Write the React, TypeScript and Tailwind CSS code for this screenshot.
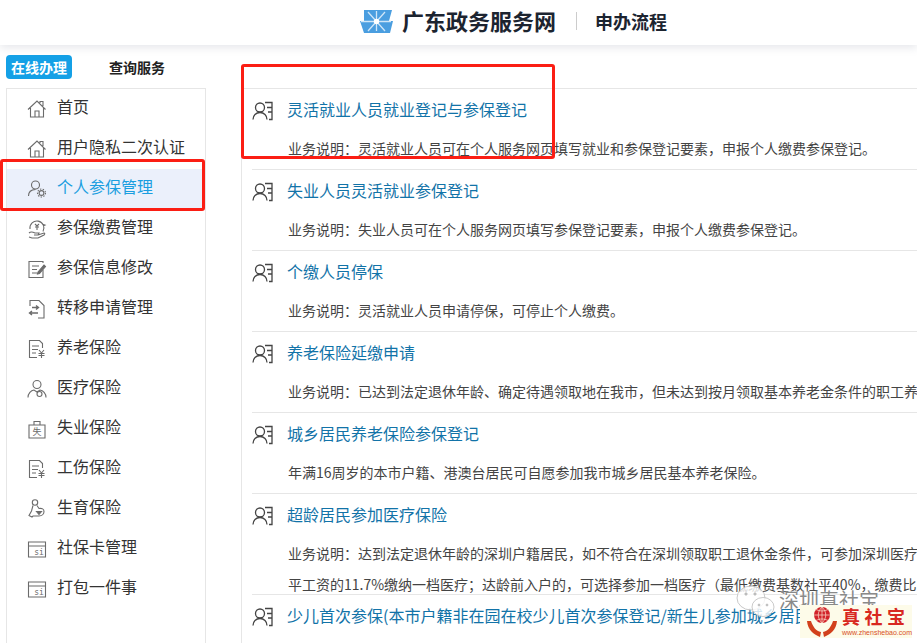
import type { ReactNode } from "react";

const font = { fontFamily: '"Noto Sans CJK SC", "Noto Sans", sans-serif' };

const Icon = ({ children }: { children: ReactNode }) => (
  <svg viewBox="0 0 20 20" className="w-5 h-5 shrink-0" fill="none" stroke="#6b6b6b" strokeWidth="1.1">
    {children}
  </svg>
);

const House = () => (
  <Icon>
    <path d="M1 10.500 10 2l8.500 8.500M3.500 9v9h13V9M8 18v-6h4v6M13 4V2.500h3v4.500" />
  </Icon>
);
const PersonGear = () => (
  <Icon>
    <circle cx="8.500" cy="6" r="4" />
    <path d="M1.500 17c0-4 2.500-6.500 7-6.500" />
    <circle cx="14.500" cy="14" r="2.400" />
    <circle cx="14.500" cy="14" r="4" strokeDasharray="1.400 1.400" />
  </Icon>
);
const Pay = () => (
  <Icon>
    <path d="M3 10a7 7 0 1 1 13 2.500M15 5l3 1-2 1" />
    <path d="M8 5l2 2 2-2M10 7v4M8 8h4" />
    <path d="M2 14c2-2 4-1 6 0h4l-1 2H7m4 0 6-2c1 0 1 1 0 2l-6 3H5l-3-1" />
  </Icon>
);
const Edit = () => (
  <Icon>
    <path d="M16 11v7.500H2v-16h14V4" />
    <path d="M5 7h7M5 10.500h5M5 14h5" />
    <path d="m11 13 6-7 1.500 1.500-6 7-2 .5z" fill="#6b6b6b" />
  </Icon>
);
const Transfer = () => (
  <Icon>
    <path d="M3 7V1.500h9l5 5v12.500h-6" />
    <path d="M5 8.500h6M9 6.500l2.500 2-2.500 2" strokeWidth="1.400" />
    <path d="M11 14H2.500M5 12l-2.500 2 2.500 2" strokeWidth="1.400" />
  </Icon>
);
const FileYen = () => (
  <Icon>
    <path d="M10 18.500H2.500v-17h10l3 3V9" />
    <path d="M5 7h7M5 10.500h6M5 14h4" />
    <path d="m12 11 2.500 3 2.500-3M11.500 14.500h6M11.500 16.500h6M14.500 14v5" />
  </Icon>
);
const Doctor = () => (
  <Icon>
    <circle cx="10" cy="5.500" r="4" />
    <path d="M1 18.500c0-4 3-7 6-7.500l3 2 3-2c3 .5 6 3.500 6 7.500" />
    <circle cx="12.500" cy="15" r="2.500" />
  </Icon>
);
const Case = () => (
  <Icon>
    <path d="M2 6h16v13H2zM7 6V2.500h6V6" />
    <text x="10" y="16" textAnchor="middle" fontSize="9" fill="#6b6b6b" stroke="none" style={font}>失</text>
  </Icon>
);
const Mother = () => (
  <Icon>
    <circle cx="8" cy="3.500" r="2.700" />
    <path d="M6 6.500 4.500 12 2 16.500l3 1.500 1-1h6c3 0 5-2 5-4.500S15 9 12 9.500L10 6.500" />
    <path d="M9.500 12.500h5l-2.500 3z" fill="#6b6b6b" />
  </Icon>
);
const Card = () => (
  <Icon>
    <path d="M1.500 3h17v15h-17zM1.500 7h17" />
    <text x="12" y="16" textAnchor="middle" fontSize="8" fill="#6b6b6b" stroke="none" style={{ fontFamily: '"DejaVu Sans Mono", monospace' }}>si</text>
  </Icon>
);
const Guide = () => (
  <svg viewBox="0 0 22 20" className="w-[22px] h-5 shrink-0" fill="none" stroke="#444" strokeWidth="1.300">
    <circle cx="8" cy="6.500" r="4.500" />
    <path d="M1 18.500c0-4 3-7 7-7s7 3 7 7" />
    <path d="M13 1.500h7v17h-3M15 6.500h5M16 11h4" />
  </svg>
);

const menu = [
  { label: "首页", icon: <House /> },
  { label: "用户隐私二次认证", icon: <House /> },
  { label: "个人参保管理", icon: <PersonGear />, active: true },
  { label: "参保缴费管理", icon: <Pay /> },
  { label: "参保信息修改", icon: <Edit /> },
  { label: "转移申请管理", icon: <Transfer /> },
  { label: "养老保险", icon: <FileYen /> },
  { label: "医疗保险", icon: <Doctor /> },
  { label: "失业保险", icon: <Case /> },
  { label: "工伤保险", icon: <FileYen /> },
  { label: "生育保险", icon: <Mother /> },
  { label: "社保卡管理", icon: <Card /> },
  { label: "打包一件事", icon: <Card /> },
];

const services = [
  { title: "灵活就业人员就业登记与参保登记", desc: ["业务说明：灵活就业人员可在个人服务网页填写就业和参保登记要素，申报个人缴费参保登记。"] },
  { title: "失业人员灵活就业参保登记", desc: ["业务说明：失业人员可在个人服务网页填写参保登记要素，申报个人缴费参保登记。"] },
  { title: "个缴人员停保", desc: ["业务说明：灵活就业人员申请停保，可停止个人缴费。"] },
  { title: "养老保险延缴申请", desc: ["业务说明：已达到法定退休年龄、确定待遇领取地在我市，但未达到按月领取基本养老金条件的职工养"] },
  { title: "城乡居民养老保险参保登记", desc: ["年满16周岁的本市户籍、港澳台居民可自愿参加我市城乡居民基本养老保险。"] },
  {
    title: "超龄居民参加医疗保险",
    desc: [
      "业务说明：达到法定退休年龄的深圳户籍居民，如不符合在深圳领取职工退休金条件，可参加深圳医疗",
      "平工资的11.7%缴纳一档医疗；达龄前入户的，可选择参加一档医疗（最低缴费基数社平40%，缴费比",
    ],
  },
  { title: "少儿首次参保(本市户籍非在园在校少儿首次参保登记/新生儿参加城乡居民", desc: [] },
];

const RedBox = ({ className }: { className: string }) => (
  <div className={`absolute border-[3px] border-[#fb1e14] rounded-[3px] ${className}`} />
);

export default function App() {
  return (
    <div className="relative h-[643px] w-full overflow-hidden bg-white text-[#333]" style={font}>
      <header className="h-[45px] flex items-center bg-white shadow-[0_3px_8px_rgba(120,130,150,0.18)] pl-[360px]">
        <svg viewBox="0 0 33 23" className="w-[33px] h-[23px] mb-[3px]">
          <path d="M4 0h28l-3 11H4z" fill="#4a9ee0" />
          <path d="M0 11h33l-3 12H4z" fill="#4a9ee0" />
          <path d="M8 2l8 9M25 2l-8 9M8 21l8-9M25 21l-8-9M16.500 1v20M1 11.500h30" stroke="#cfe6f8" strokeWidth="1.300" />
          <circle cx="16.500" cy="11.500" r="2.700" fill="#fff" />
        </svg>
        <span className="ml-[9px] mb-[5px] text-[22px] font-bold text-[#1c2430] leading-none">广东政务服务网</span>
        <span className="ml-[20px] w-px h-[18px] mb-[3px] bg-[#ccc]" />
        <span className="ml-[18px] mb-[4px] text-[18px] font-bold text-[#1c2430] leading-none">申办流程</span>
      </header>

      <div className="flex pl-[6px]">
        <aside className="w-[200px] shrink-0">
          <div className="flex items-center h-[24px] mt-[10px] text-sm font-bold">
            <span className="w-[66px] h-[24px] flex items-center justify-center rounded-[4px] bg-[#14a0e6] text-white">在线办理</span>
            <span className="ml-[37px] text-[#222]">查询服务</span>
          </div>
          <nav className="mt-[9px] h-[560px] border border-[#e6e6e6]">
            {menu.map((m) => (
              <div
                key={m.label}
                className={`h-10 flex items-center gap-[10px] pl-[20px] text-base ${m.active ? "bg-[#ebf0fb] text-[#1a9ee0]" : "text-[#333]"}`}
              >
                {m.icon}
                <span className="mb-[7px]">{m.label}</span>
              </div>
            ))}
          </nav>
        </aside>

        <main className="ml-[35px] flex-1 min-w-0 mt-[43px] border-l border-t border-[#e6e6e6] pl-[10px]">
          {services.map((s, i) => (
            <div key={s.title} className={`pt-[11px] ${i < services.length - 1 ? "border-b border-[#e6e6e6]" : ""}`}>
              <div className="h-[21px] flex items-center gap-[13px]">
                <Guide />
                <span className="mb-[4px] text-base text-[#1273a8] whitespace-nowrap">{s.title}</span>
              </div>
              <div className={`pl-[36px] pt-[17px] flex flex-col gap-[11px] ${s.desc.length > 1 ? "pb-0" : "pb-[11px]"}`}>
                {s.desc.map((line) => (
                  <p key={line} className="h-[20px] leading-[20px] text-sm text-[#444] whitespace-nowrap">{line}</p>
                ))}
              </div>
            </div>
          ))}
        </main>
      </div>

      <RedBox className="left-0 top-[159px] w-[205px] h-[52px]" />
      <RedBox className="left-[241px] top-[64px] w-[314px] h-[95px]" />

      {/* watermark */}
      <div className="absolute left-[736px] top-[584px] flex items-start">
        <svg viewBox="0 0 40 36" className="w-[40px] h-[36px]" fill="rgba(255,255,255,0.8)" stroke="#bbb" strokeWidth="0.800">
          <ellipse cx="15" cy="14" rx="14" ry="12" />
          <ellipse cx="27" cy="23" rx="11" ry="9.500" />
          <circle cx="10" cy="10" r="1.200" fill="#bbb" />
          <circle cx="19" cy="10" r="1.200" fill="#bbb" />
          <circle cx="23" cy="21" r="1" fill="#bbb" />
          <circle cx="31" cy="21" r="1" fill="#bbb" />
        </svg>
        <span className="ml-[3px] mt-[2px] text-[20px] leading-[28px] text-[#8a8a8a] [text-shadow:0_0_2px_#fff]">深圳真社宝</span>
      </div>
      <div className="absolute left-[800px] top-[605px] w-[112px] h-[33px] bg-[#fdfbe9] flex items-center pl-[7px]">
        <svg viewBox="0 0 30 33" className="w-[30px] h-[33px] shrink-0">
          <circle cx="15" cy="10" r="8" fill="#d2232a" />
          <path d="M7 10h16M15 2v16M9 4.500c4 2 8 2 12 0M9 15.500c4-2 8-2 12 0M15 2c-5 5-5 11 0 16M15 2c5 5 5 11 0 16" stroke="#fbe3d0" strokeWidth="0.700" fill="none" />
          <path d="M0 16c1 9 6 13 13 16l1-5c-5-1-8-5-10-11z" fill="#d2401c" />
          <path d="M30 16c-1 9-6 13-13 16l-1-5c5-1 8-5 10-11z" fill="#d2401c" />
        </svg>
        <div className="ml-[5px] flex flex-col items-start">
          <span className="text-[18px] leading-[20px] font-bold tracking-[4.500px] text-[#d8281f] mb-[3px]">真社宝</span>
          <span className="text-[7px] leading-[8px] text-[#d8501f]" style={{ fontFamily: '"Liberation Sans", sans-serif' }}>www.zhenshebao.com</span>
        </div>
      </div>
    </div>
  );
}
